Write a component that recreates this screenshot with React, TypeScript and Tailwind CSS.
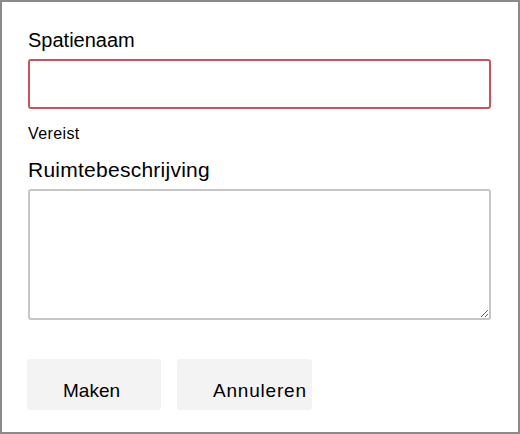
export default function App() {
    return (
        <div className="w-[520px] h-[434px] bg-white border-2 border-[#8a8a8a] pt-[26px] pl-[26px] pr-[27px] text-black font-['Liberation_Sans',Arial,sans-serif]">
            <label className="block text-[20px] leading-[24px]">Spatienaam</label>
            <input
                type="text"
                className="mt-[7px] block w-full h-[50px] border-2 border-[#c8535d] rounded-[3px] px-2 text-[16px] outline-none"
            />
            <div className="mt-[15px] text-[16px] leading-[20px] tracking-[0.4px]">Vereist</div>
            <label className="mt-[14px] block text-[21px] leading-[24px] tracking-[0.25px]">Ruimtebeschrijving</label>
            <textarea className="mt-[7px] block w-full h-[131px] border-2 border-[#c6c6c6] rounded-[3px] p-2 text-[16px] outline-none resize" />
            <div className="mt-[39px] flex gap-4 -ml-px">
                <button className="w-[134px] h-[51px] bg-[#f3f3f3] rounded-[3px] pl-[36px] pt-[12px] text-left text-[19px] leading-[24px] overflow-hidden whitespace-nowrap self-start">
                    Maken
                </button>
                <button className="w-[135px] h-[51px] bg-[#f3f3f3] rounded-[3px] pl-[36px] pt-[12px] text-left text-[19px] leading-[24px] tracking-[0.8px] overflow-hidden whitespace-nowrap self-start">
                    Annuleren
                </button>
            </div>
        </div>
    );
}
